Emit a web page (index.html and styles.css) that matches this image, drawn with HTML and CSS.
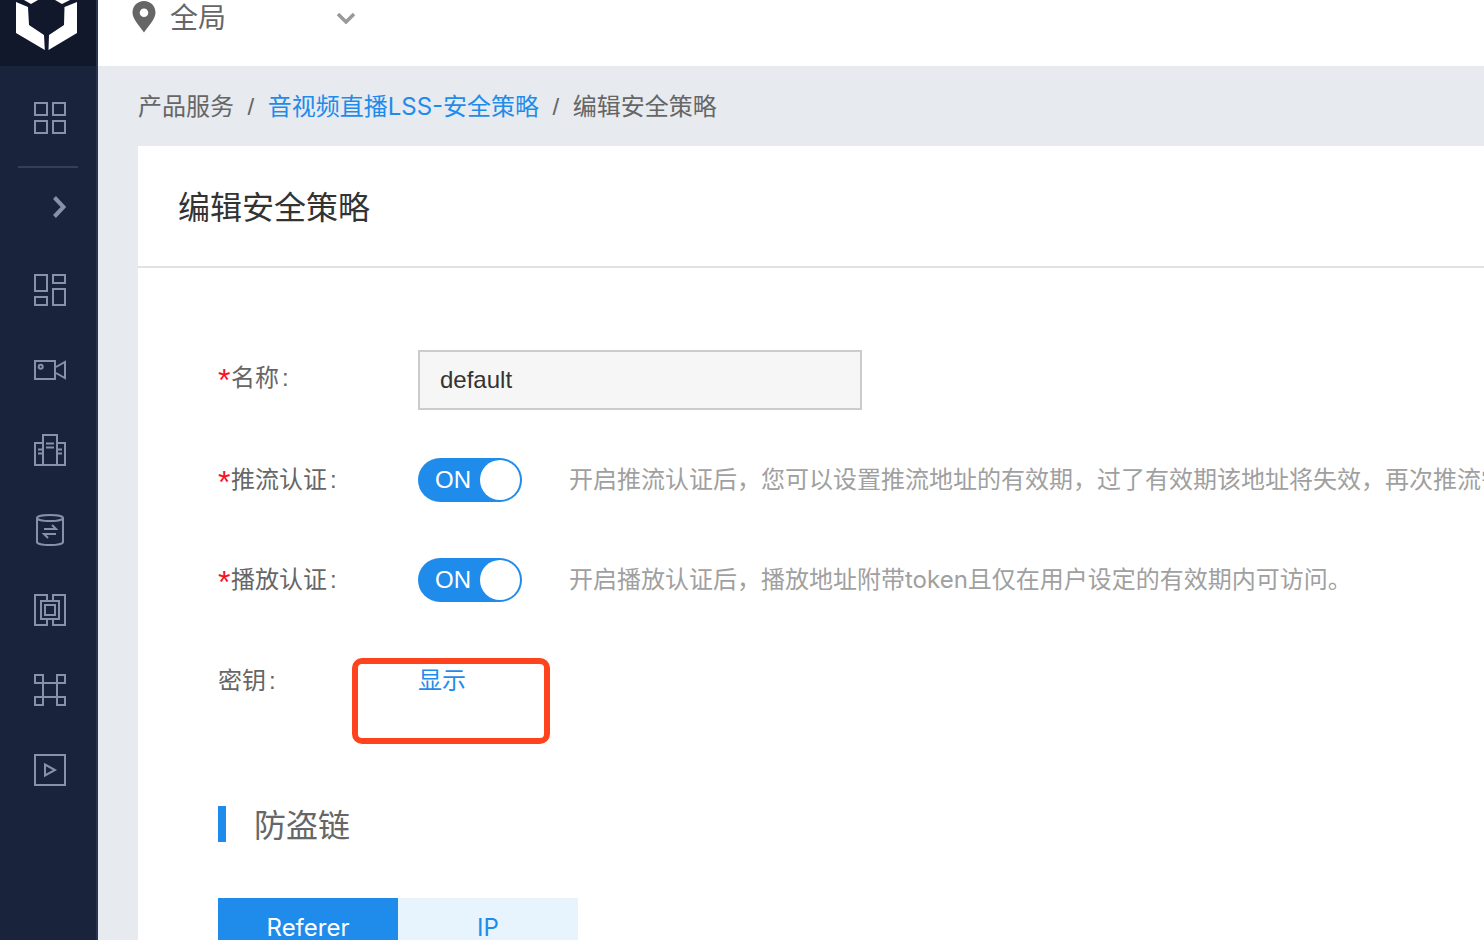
FILE: index.html
```html
<!DOCTYPE html>
<html lang="zh-CN">
<head>
<meta charset="utf-8">
<title>编辑安全策略</title>
<link rel="stylesheet" href="styles.css">
</head>
<body>
<div class="app">
  <aside class="sidebar">
    <div class="logo">
      <svg width="96" height="66" viewBox="0 0 96 66"><path d="M16 2 28 7 29 25 44 35 44.800 50 16 33ZM77 2 64.500 7 64 25 49 35 48.500 50 77 33ZM24 0 31 4 38 0ZM55 0 62 4 70 0Z" fill="#fff"/></svg>
    </div>
    <nav class="nav">
      <div class="nav-item"><svg class="icon" viewBox="0 0 32 32"><rect x="1" y="1" width="12" height="12"/><rect x="19" y="1" width="12" height="12"/><rect x="1" y="19" width="12" height="12"/><rect x="19" y="19" width="12" height="12"/></svg></div>
      <div class="nav-divider"></div>
      <div class="nav-toggle"><svg class="icon" viewBox="0 0 32 32"><path class="chevron" d="M20.500 6.500l9 9.500-9 9.500"/></svg></div>
      <div class="nav-item"><svg class="icon" viewBox="0 0 32 32"><rect x="1" y="1" width="12" height="16"/><rect x="19" y="1" width="12" height="8"/><rect x="1" y="23" width="12" height="8"/><rect x="19" y="15" width="12" height="16"/></svg></div>
      <div class="nav-item"><svg class="icon" viewBox="0 0 32 32"><rect x="1" y="7" width="20" height="18"/><path d="M22 13 31 8V24L22 19"/><circle cx="6.700" cy="12.700" r="2"/></svg></div>
      <div class="nav-item"><svg class="icon" viewBox="0 0 32 32"><rect x="9" y="1" width="14" height="30"/><path d="M9 9H1V31H31V9H23M12 9.500H20M12 13.500H20M4 15.500H8M4 19.500H8M24 15.500H28M24 19.500H28"/></svg></div>
      <div class="nav-item"><svg class="icon" viewBox="0 0 32 32"><ellipse cx="16" cy="4" rx="13" ry="3"/><path d="M3 4V28A13 3 0 0 0 29 28V4M10 15H22L18 11M22 20H10L14 24"/></svg></div>
      <div class="nav-item"><svg class="icon" viewBox="0 0 32 32"><path d="M13 6V1H1V31H13V26M19 6V1H31V31H19V26"/><rect x="7" y="7" width="18" height="18"/><rect x="11" y="11" width="10" height="10"/></svg></div>
      <div class="nav-item"><svg class="icon" viewBox="0 0 32 32"><rect x="1" y="1" width="8" height="8"/><rect x="23" y="1" width="8" height="8"/><rect x="1" y="23" width="8" height="8"/><rect x="23" y="23" width="8" height="8"/><path d="M9 9H23V23H9Z"/></svg></div>
      <div class="nav-item"><svg class="icon" viewBox="0 0 32 32"><rect x="1" y="1" width="30" height="30"/><path d="M11 10.500V21.500L21 16Z"/></svg></div>
    </nav>
  </aside>
  <div class="main">
    <header class="topbar">
      <svg class="pin" width="24" height="32" viewBox="0 0 24 32"><path fill-rule="evenodd" d="M12 0C5.400 0 0.500 5 0.500 11.500 0.500 18 7.500 25 12 31.500 16.500 25 23.500 18 23.500 11.500 23.500 5 18.600 0 12 0ZM12 7.500A4.300 4.300 0 1 1 12 16.100 4.300 4.300 0 0 1 12 7.500Z" fill="#666"/></svg>
      <span class="region">全局</span>
      <svg class="caret" width="20" height="12" viewBox="0 0 20 12"><path d="M2 2 10 10 18 2" fill="none" stroke="#999" stroke-width="3.500"/></svg>
    </header>
    <div class="crumbs">
      <span>产品服务</span><span class="sep">/</span><a class="crumb-link">音视频直播LSS-安全策略</a><span class="sep">/</span><span>编辑安全策略</span>
    </div>
    <section class="card">
      <h1 class="card-title">编辑安全策略</h1>
      <div class="form">
        <div class="row row-name">
          <label class="label"><i>*</i>名称<span class="colon">:</span></label>
          <div class="input">default</div>
        </div>
        <div class="row">
          <label class="label"><i>*</i>推流认证<span class="colon">:</span></label>
          <div class="switch"><span>ON</span><b></b></div>
          <p class="desc">开启推流认证后&#xFF0C;您可以设置推流地址的有效期&#xFF0C;过了有效期该地址将失效&#xFF0C;再次推流需要重新获取新的地址。</p>
        </div>
        <div class="row">
          <label class="label"><i>*</i>播放认证<span class="colon">:</span></label>
          <div class="switch"><span>ON</span><b></b></div>
          <p class="desc">开启播放认证后&#xFF0C;播放地址附带token且仅在用户设定的有效期内可访问。</p>
        </div>
        <div class="row row-key">
          <label class="label">密钥<span class="colon">:</span></label>
          <a class="show-key">显示</a>
          <div class="annotation"></div>
        </div>
        <h2 class="section-title">防盗链</h2>
        <div class="tabs">
          <div class="tab active">Referer</div>
          <div class="tab">IP</div>
        </div>
      </div>
    </section>
  </div>
</div>
</body>
</html>
```
FILE: styles.css
```css
* { box-sizing: border-box; }
html, body { margin: 0; height: 100%; overflow: hidden; }
body {
  font-family: "Liberation Sans", "Noto Sans CJK SC", sans-serif;
  font-size: 24px;
  color: #666;
  background: #e7eaef;
}
.app { display: flex; width: 1484px; height: 940px; overflow: hidden; }

.sidebar {
  flex: none;
  width: 98px;
  background: #19233c;
  border-right: 2px solid #2a3553;
}
.logo { height: 66px; background: #12182c; margin-bottom: 12px; }
.logo svg { display: block; }
.nav { display: flex; flex-direction: column; }
.nav-item { height: 80px; padding-left: 34px; display: flex; align-items: center; }
.nav-divider { height: 2px; width: 60px; margin: 8px 0 0 18px; background: #343f5b; }
.nav-toggle { height: 78px; margin-bottom: 4px; padding-left: 34px; display: flex; align-items: center; }
.icon { width: 32px; height: 32px; fill: none; stroke: #8592ab; stroke-width: 2; }
.chevron { stroke-width: 4; }

.main { flex: 1; min-width: 0; display: flex; flex-direction: column; }
.topbar {
  flex: none;
  height: 66px;
  padding: 0 0 30px 34px;
  background: #fff;
  display: flex;
  align-items: center;
}
.pin { flex: none; margin-top: -2px; }
.region { margin-left: 14px; width: 166px; font-size: 28px; line-height: 36px; margin-top: 1px; color: #666; }
.caret { flex: none; }

.crumbs {
  flex: none;
  height: 80px;
  padding-left: 40px;
  padding-top: 1px;
  display: flex;
  align-items: center;
  line-height: 32px;
  color: #666;
  white-space: nowrap;
}
.sep { margin: 0 13.500px; color: #666; }
.crumb-link { color: #1f8ceb; font-family: Inter, "Noto Sans CJK SC", sans-serif; }

.card { flex: none; margin-left: 40px; height: 900px; background: #fff; }
.card-title {
  margin: 0;
  height: 122px;
  padding: 40px 0 0 40px;
  font-size: 32px;
  line-height: 44px;
  font-weight: 400;
  color: #333;
  border-bottom: 2px solid #e2e2e2;
}
.form { padding: 82px 0 0 80px; }
.row { position: relative; display: flex; align-items: center; height: 60px; margin-bottom: 40px; white-space: nowrap; }
.label { flex: none; width: 200px; line-height: 32px; color: #666; }
.label i {
  display: inline-block;
  width: 13px;
  line-height: 0;
  vertical-align: -5px;
  font-size: 32px;
  font-style: normal;
  color: #f5141e;
}
.colon { margin-left: 3px; }
.row-name .label { margin-top: -4px; }
.input {
  flex: none;
  width: 444px;
  height: 60px;
  padding-left: 20px;
  line-height: 56px;
  font-size: 24px;
  color: #333;
  background: #f6f6f6;
  border: 2px solid #ccc;
}
.switch {
  flex: none;
  position: relative;
  width: 104px;
  height: 44px;
  padding-left: 17px;
  line-height: 44px;
  color: #fff;
  background: #1f8ceb;
  border-radius: 22px;
}
.switch b {
  position: absolute;
  right: 2px;
  top: 2px;
  width: 40px;
  height: 40px;
  border-radius: 50%;
  background: #fff;
}
.desc { margin: 0 0 0 47px; color: #a0a0a0; line-height: 32px; font-family: Inter, "Noto Sans CJK SC", sans-serif; }
.row-key { height: 60px; margin-bottom: 0; }
.row-key .label, .show-key { margin-top: 1px; }
.show-key { color: #1f8ceb; line-height: 32px; }
.annotation {
  position: absolute;
  left: 134px;
  top: 8px;
  width: 198px;
  height: 86px;
  border: 6px solid #ff431d;
  border-radius: 10px;
}
.section-title {
  margin: 96px 0 0;
  height: 36px;
  padding-left: 28px;
  border-left: 8px solid #1f8ceb;
  font-size: 32px;
  line-height: 40px;
  font-weight: 400;
  color: #666;
}
.tabs { display: flex; margin-top: 56px; }
.tab {
  width: 180px;
  height: 60px;
  padding-top: 14px;
  text-align: center;
  line-height: 32px;
  color: #1f8ceb;
  background: #e8f4fd;
  font-family: Inter, sans-serif;
}
.tab.active { color: #fff; background: #1f8ceb; }
```
